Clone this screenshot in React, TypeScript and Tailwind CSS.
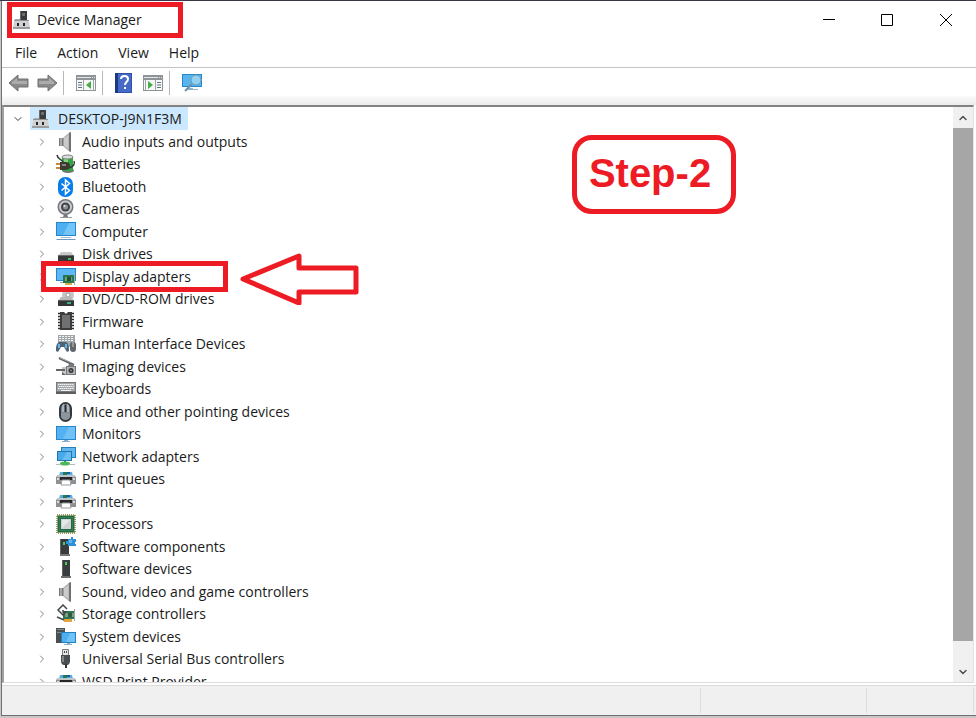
import React, { useState } from 'react';
import { ChevronDown, ChevronRight, ChevronUp } from 'lucide-react';

interface Device {
  label: string;
  icon: React.ReactNode;
  highlighted?: boolean;
}

interface IconProps {
  children: React.ReactNode;
}

const Icon: React.FC<IconProps> = ({ children }) => (
  <svg viewBox="0 0 20 20" className="h-5 w-5 shrink-0" aria-hidden="true">
    {children}
  </svg>
);

// Root computer icon, also used in the title bar
const RootIcon = () => (
  <Icon>
    <path d="M9 1h7v10H9z" fill="#3b3b3d" />
    <path d="M11 3h3v3h-3z" fill="#6c6c70" />
    <path d="M9 1h1v10H9z" fill="#6b6b6e" />
    <path d="M4 9h5v2H4z" fill="#a9abad" />
    <path d="M3 11h15l1 7H2z" fill="#d0d1d2" />
    <path d="M3 10h15v1H3z" fill="#8f9194" />
    <path d="M2 17h17v2H2z" fill="#9b9c9e" />
    <path d="M6 13h2v3H6zM12 13h2v3h-2z" fill="#222224" />
  </Icon>
);

const SpeakerIcon = () => (
  <Icon>
    <path d="M3 6h4v8H3z" fill="#77787a" />
    <path d="M4 6h2v8H4z" fill="#a7a8a9" />
    <path d="M7 6l7-6v20l-7-6z" fill="#9fa0a2" />
    <path d="M8 6l4-3v14l-4-3z" fill="#c9cacb" />
    <path d="M13 1l2-1v20l-2-1z" fill="#6f7173" />
    <path d="M12 2h1v16h-1z" fill="#b9babc" />
  </Icon>
);

const BatteryIcon = () => (
  <Icon>
    <ellipse cx="12" cy="16.500" rx="6" ry="2.500" fill="#6f7375" />
    <path d="M6 3h11v14H6z" fill="#34a641" />
    <path d="M8 4h4v12H8z" fill="#82d67a" />
    <ellipse cx="11.500" cy="3" rx="5.500" ry="2" fill="#d9dddb" stroke="#777d79" />
    <path d="M1 1c1 5 4 3 6 7M12 14c6-1 7-4 6-7" fill="none" stroke="#34383a" strokeWidth="1.500" />
    <path d="M4 8h6c3 0 4 2 4 4s-1 4-4 4H4z" fill="#3d3a33" />
    <path d="M6 10h4v2H6z" fill="#898478" />
    <path d="M0 9h4v2H0zM0 13h4v2H0z" fill="#c28c38" />
  </Icon>
);

const BluetoothIcon = () => (
  <Icon>
    <rect x="2" y="0" width="15" height="20" rx="7" fill="#087eea" />
    <path d="M5.500 6.500l8 7-4 3.500V3l4 3.500-8 7" fill="none" stroke="#fff" strokeWidth="1.500" />
  </Icon>
);

const CameraIcon = () => (
  <Icon>
    <path d="M8 15h3l1 3H7z" fill="#77797c" />
    <path d="M4 18h12v1H4z" fill="#9b9c9e" />
    <circle cx="9.500" cy="8" r="8" fill="#75777a" />
    <circle cx="9.500" cy="8" r="6.500" fill="#c9cbcd" />
    <circle cx="9.500" cy="8" r="4.500" fill="#424449" />
    <circle cx="9.500" cy="8" r="2.500" fill="#8d9197" />
    <circle cx="8.500" cy="7" r="1" fill="#e5e8ed" />
  </Icon>
);

const ComputerIcon = () => (
  <Icon>
    <path d="M0 0h20v14H0z" fill="#2686cc" />
    <path d="M1 1h18v12H1z" fill="#4eaff1" />
    <path d="M13 1h6v12H7z" fill="#73c5f9" />
    <path d="M5 15h10v1H5z" fill="#a5bdcc" />
    <path d="M1 17h18l1 1H0z" fill="#6b9cc4" />
  </Icon>
);

const DiskIcon = () => (
  <Icon>
    <path d="M5 8h10l3 4H2z" fill="#c7c8c9" />
    <path d="M2 11h16v6H2z" fill="#353739" />
    <path d="M2 11h16v1H2z" fill="#696b6d" />
    <path d="M12 14h3v2h-3z" fill="#37c45d" />
  </Icon>
);

const DisplayIcon = () => (
  <Icon>
    <path d="M0 1h20v13H0z" fill="#2686cc" />
    <path d="M1 2h18v11H1z" fill="#5db7f3" />
    <path d="M4 15h5v1H4z" fill="#85aac3" />
    <path d="M7 8h12v8H7z" fill="#2b764c" />
    <path d="M9 10h7v4H9z" fill="#69a36c" />
    <path d="M11 10h4v4h-4z" fill="#294b37" />
    <path d="M18 6h1v12h-1z" fill="#a3afa7" />
    <path d="M9 16h7v2H9z" fill="#d9ae52" />
  </Icon>
);

const DvdIcon = () => (
  <Icon>
    <circle cx="12" cy="6" r="6" fill="#c3c5c7" />
    <circle cx="12" cy="6" r="2" fill="#fff" stroke="#9a9da0" />
    <path d="M5 8h10l3 4H2z" fill="#b6b8ba" />
    <path d="M2 11h16v6H2z" fill="#343638" />
    <path d="M2 11h16v1H2z" fill="#616467" />
    <path d="M11 13h4v2h-4z" fill="#31b481" />
  </Icon>
);

const FirmwareIcon = () => (
  <Icon>
    <path d="M2 1.500h3M2 4.500h3M2 7.500h3M2 10.500h3M2 13.500h3M2 16.500h3M15 1.500h3M15 4.500h3M15 7.500h3M15 10.500h3M15 13.500h3M15 16.500h3" stroke="#2c2c2d" strokeWidth="1.500" />
    <path d="M4 0h4l2 2 2-2h4v18H4z" fill="#3a3b3c" />
    <path d="M6 3h8v13H6z" fill="#6f7072" />
  </Icon>
);

const HidIcon = () => (
  <Icon>
    <path d="M2 1h17v12H2z" fill="#a2a7ab" />
    <path d="M3 2.500h15M3 4.500h15M3 6.500h15" stroke="#f2f3f3" strokeDasharray="2 1" />
    <path d="M3 8h7c3 2 3 5 3 9l-2 1-3-5H5l-3 5-2-1c0-4 0-7 3-9z" fill="#4f6376" />
    <path d="M2 10h2v4H2zM9 10h2v4H9z" fill="#67b6e9" />
    <rect x="14" y="8" width="6" height="10" rx="3" fill="#61666b" />
    <path d="M17 8v5" stroke="#c8cacc" />
  </Icon>
);

const ImagingIcon = () => (
  <Icon>
    <path d="M3 1l15 7" stroke="#5b5e60" strokeWidth="2" />
    <path d="M4 1l12 5" stroke="#a6a8a9" />
    <path d="M10 9h2l1-2h4l1 2h2v9H10z" fill="#777a7c" />
    <path d="M11 10h8v7h-8z" fill="#b1b3b5" />
    <circle cx="15" cy="13.500" r="2.500" fill="#343638" />
    <circle cx="15" cy="13.500" r="1" fill="#85898b" />
    <path d="M6 10h4v8H6z" fill="#c4c5c7" />
    <path d="M0 12h9v2H0z" fill="#646668" />
    <path d="M6 15l4 3H6z" fill="#646668" />
  </Icon>
);

const KeyboardIcon = () => (
  <Icon>
    <path d="M0 3h20v12H0z" fill="#777a7d" />
    <path d="M1 4h18v8H1z" fill="#a5a8aa" />
    <path d="M2 5.500h16M3 7.500h15M2 9.500h16" stroke="#f4f4f4" strokeDasharray="1.500 .5" />
    <path d="M5 11.500h10" stroke="#f4f4f4" />
    <path d="M0 13h20v2H0z" fill="#5c5f62" />
  </Icon>
);

const MouseIcon = () => (
  <Icon>
    <rect x="4" y="1" width="11" height="18" rx="5.500" fill="#7d868e" stroke="#34393d" strokeWidth="2" />
    <path d="M6 5c0-2 1-3 2-3v8H6zM11 2c1 0 2 1 2 3v5h-2z" fill="#aab3bc" />
    <path d="M5 11h9v3c0 5-9 5-9 0z" fill="#8b959e" />
    <path d="M9.500 3v7" stroke="#222" strokeWidth="1.500" />
  </Icon>
);

const MonitorIcon = () => (
  <Icon>
    <path d="M0 2h20v14H0z" fill="#2686cc" />
    <path d="M1 3h18v12H1z" fill="#54b2f2" />
    <path d="M13 3h6v12H7z" fill="#70c2f6" />
    <path d="M8 16h4v1h2v1H6v-1h2z" fill="#88adca" />
  </Icon>
);

const NetworkIcon = () => (
  <Icon>
    <path d="M5 0h15v11H5z" fill="#237fbd" />
    <path d="M6 1h13v9H6z" fill="#60b8ee" />
    <path d="M1 4h15v10H1z" fill="#2076b0" />
    <path d="M2 5h13v8H2z" fill="#48a9ea" />
    <path d="M11 5h4v8H6z" fill="#69bdf3" />
    <path d="M8 14h2v3H8z" fill="#377e43" />
    <ellipse cx="9" cy="16.500" rx="5" ry="2" fill="#4cb857" />
    <path d="M0 17.500h5M13 17.500h6" stroke="#b6bdb7" />
  </Icon>
);

const PrinterIcon = () => (
  <Icon>
    <path d="M4 3h12l1 4H3z" fill="#55aee7" />
    <path d="M7 3h4v3H7z" fill="#28774d" />
    <path d="M11 3h3v2h-3z" fill="#195ba0" />
    <path d="M2 6h16l2 2v7h-5v-3H5v3H0V8z" fill="#8d9194" />
    <path d="M2 6h16l1 2H1z" fill="#c2c5c7" />
    <path d="M4 8h12v3H4z" fill="#26282b" />
    <path d="M6 11h8l1 5H5z" fill="#fff" stroke="#96999c" />
    <path d="M1 10h2M17 10h2" stroke="#d9dbdd" strokeWidth="2" />
  </Icon>
);

const ProcessorIcon = () => (
  <Icon>
    <path d="M1 1h18v18H1z" fill="#9db48d" stroke="#80793c" strokeWidth="1.500" strokeDasharray="1 1" />
    <path d="M2 2h16v16H2z" fill="#1f6b45" />
    <path d="M3.500 3.500h13v13h-13z" fill="none" stroke="#4d9065" strokeDasharray="1 1" />
    <path d="M5 5h10v10H5z" fill="#d0d2d3" />
    <path d="M6 6h8L6 14z" fill="#e6e7e8" />
  </Icon>
);

const TowerIcon = () => (
  <Icon>
    <path d="M6 1h8v16H6z" fill="#3a3d3f" />
    <path d="M6 1h1v16H6z" fill="#606366" />
    <path d="M9 3h2v3H9z" fill="#45cf5c" />
    <path d="M5 17h10v2H5z" fill="#6d7072" />
  </Icon>
);

const ComponentIcon = () => (
  <Icon>
    <path d="M4 2h9v15H4z" fill="#393c3e" />
    <path d="M4 2h1v15H4z" fill="#626568" />
    <path d="M7 5h2v3H7z" fill="#45cf5c" />
    <path d="M4 17h10v2H4z" fill="#75787a" />
    <path d="M12 2h3V0h2v2h3v3h-1v2h1v2h-8V7h-2V4h2z" fill="#2d91d8" />
    <path d="M13 3h3v3h-3z" fill="#67b5e8" />
  </Icon>
);

const StorageIcon = () => (
  <Icon>
    <path d="M7 7h12v8H7z" fill="#2c7551" />
    <path d="M9 9h9v4H9z" fill="#79a184" />
    <path d="M12 9h4v4h-4z" fill="#315842" />
    <path d="M18 5h1v12h-1z" fill="#a1aaa4" />
    <path d="M8 15h8v3H8z" fill="#e7a43a" />
    <path d="M11 5L7 1 2 6l5 5 3-3H7V6" fill="none" stroke="#44484b" strokeWidth="1.500" />
    <path d="M1 13l7 3" fill="none" stroke="#44484b" strokeWidth="1.500" />
  </Icon>
);

const SystemIcon = () => (
  <Icon>
    <path d="M0 1h9v15H0z" fill="#4c5053" />
    <path d="M1 2h7v1H1zM1 5h7v1H1z" fill="#83888b" />
    <path d="M5 5h15v11H5z" fill="#2380c0" />
    <path d="M6 6h13v9H6z" fill="#4eafef" />
    <path d="M14 6h5v9h-9z" fill="#70c2f6" />
    <path d="M11 16h3v1h2v1H8v-1h3z" fill="#89aec7" />
  </Icon>
);

const UsbIcon = () => (
  <Icon>
    <path d="M6.500.5h6v6h-6z" fill="#e3e4e5" stroke="#77797b" />
    <path d="M8 2h1v2H8zM10 2h1v2h-1z" fill="#494b4d" />
    <path d="M5 6h9v6c0 2-1 4-3 4H8c-2 0-3-2-3-4z" fill="#4b4e50" />
    <path d="M6 7h2v6H6z" fill="#85888a" />
    <path d="M9 15h2v4H9z" fill="#333638" />
  </Icon>
);

const devices: Device[] = [
  { label: 'Audio inputs and outputs', icon: <SpeakerIcon /> },
  { label: 'Batteries', icon: <BatteryIcon /> },
  { label: 'Bluetooth', icon: <BluetoothIcon /> },
  { label: 'Cameras', icon: <CameraIcon /> },
  { label: 'Computer', icon: <ComputerIcon /> },
  { label: 'Disk drives', icon: <DiskIcon /> },
  { label: 'Display adapters', icon: <DisplayIcon />, highlighted: true },
  { label: 'DVD/CD-ROM drives', icon: <DvdIcon /> },
  { label: 'Firmware', icon: <FirmwareIcon /> },
  { label: 'Human Interface Devices', icon: <HidIcon /> },
  { label: 'Imaging devices', icon: <ImagingIcon /> },
  { label: 'Keyboards', icon: <KeyboardIcon /> },
  { label: 'Mice and other pointing devices', icon: <MouseIcon /> },
  { label: 'Monitors', icon: <MonitorIcon /> },
  { label: 'Network adapters', icon: <NetworkIcon /> },
  { label: 'Print queues', icon: <PrinterIcon /> },
  { label: 'Printers', icon: <PrinterIcon /> },
  { label: 'Processors', icon: <ProcessorIcon /> },
  { label: 'Software components', icon: <ComponentIcon /> },
  { label: 'Software devices', icon: <TowerIcon /> },
  { label: 'Sound, video and game controllers', icon: <SpeakerIcon /> },
  { label: 'Storage controllers', icon: <StorageIcon /> },
  { label: 'System devices', icon: <SystemIcon /> },
  { label: 'Universal Serial Bus controllers', icon: <UsbIcon /> },
  { label: 'WSD Print Provider', icon: <PrinterIcon /> },
];

const TitleBar = () => (
  <header className="relative flex h-[38px] shrink-0 items-center justify-between pl-[9px]">
    <div className="flex items-center gap-[6px]">
      <RootIcon />
      <h1 className="text-sm">Device Manager</h1>
    </div>
    <div className="flex h-full">
      <button type="button" aria-label="Minimize" className="flex w-[58px] items-center justify-center">
        <svg viewBox="0 0 12 12" className="h-3 w-3"><path d="M0 5.500h12" stroke="#000" /></svg>
      </button>
      <button type="button" aria-label="Maximize" className="flex w-[58px] items-center justify-center">
        <svg viewBox="0 0 12 12" className="h-3 w-3"><path d="M.5.5h11v11H.5z" fill="none" stroke="#000" /></svg>
      </button>
      <button type="button" aria-label="Close" className="flex w-[60px] items-center justify-center">
        <svg viewBox="0 0 12 12" className="h-3 w-3"><path d="M0 0l12 12M12 0L0 12" stroke="#000" /></svg>
      </button>
    </div>
    <div className="pointer-events-none absolute top-[1px] left-[5px] h-9 w-44 border-[5px] border-[#ed1c24]" />
  </header>
);

const MenuBar = () => (
  <nav className="flex h-[29px] shrink-0 items-center gap-5 border-b border-[#c4c4c4] pl-[13px] text-sm">
    {['File', 'Action', 'View', 'Help'].map((item) => (
      <button key={item} type="button">{item}</button>
    ))}
  </nav>
);

const Toolbar = () => (
  <div className="flex h-[37px] shrink-0 flex-col">
    <div className="flex h-7 items-center pt-[2px] pl-[6px]">
      <button type="button" aria-label="Back" className="mr-2">
        <svg viewBox="0 0 21 20" className="h-5 w-[21px]"><path d="M1 10l9-8v4h10v8H10v4z" fill="#8a8a8a" stroke="#707070" /><path d="M4 9l5-4v3h10v3H4z" fill="#ababab" /></svg>
      </button>
      <button type="button" aria-label="Forward">
        <svg viewBox="0 0 21 20" className="h-5 w-[21px]"><path d="M20 10l-9-8v4H1v8h10v4z" fill="#8a8a8a" stroke="#707070" /><path d="M17 9l-5-4v3H2v3h15z" fill="#ababab" /></svg>
      </button>
      <span className="mr-3 ml-[5px] h-6 w-px bg-[#b8b8b8]" />
      <button type="button" aria-label="Show/Hide Console Tree">
        <svg viewBox="0 0 20 18" className="h-[18px] w-5"><path d="M0 1h20v16H0z" fill="#8e9498" /><path d="M1 3h14v1H1zM16 3h1v1h-1zM18 3h1v1h-1z" fill="#e4e7e8" /><path d="M1 6h18v10H1z" fill="#f7f8f8" /><path d="M2 8.500h4M2 11h4M2 13.500h4" stroke="#5f7382" /><path d="M7.500 6v10M17.500 6v10" stroke="#9ba3a8" /><path d="M15 7v8l-5-4z" fill="#44ad43" /></svg>
      </button>
      <span className="mr-3 ml-[6px] h-6 w-px bg-[#b8b8b8]" />
      <button type="button" aria-label="Help" className="mr-[11px]">
        <svg viewBox="0 0 17 20" className="h-5 w-[17px]"><path d="M0 0h17v20H0z" fill="#2e50a8" /><path d="M0 0h3v20H0z" fill="#1c3984" /><path d="M3 1h13v18H3z" fill="#4569c6" /><path d="M6 6c0-4 7-4 7 0 0 3-3 3-3 6" fill="none" stroke="#fff" strokeWidth="2" /><path d="M9 14h2v2H9z" fill="#fff" /></svg>
      </button>
      <button type="button" aria-label="Show/Hide Action Pane">
        <svg viewBox="0 0 20 18" className="h-[18px] w-5"><path d="M0 1h20v16H0z" fill="#8e9498" /><path d="M1 3h14v1H1zM16 3h1v1h-1zM18 3h1v1h-1z" fill="#e4e7e8" /><path d="M1 6h18v10H1z" fill="#f7f8f8" /><path d="M14 8.500h4M14 11h4M14 13.500h4" stroke="#5f7382" /><path d="M2.500 6v10M12.500 6v10" stroke="#9ba3a8" /><path d="M5 7v8l5-4z" fill="#44ad43" /></svg>
      </button>
      <span className="mr-3 ml-[6px] h-6 w-px bg-[#b8b8b8]" />
      <button type="button" aria-label="Scan for hardware changes">
        <svg viewBox="0 0 21 20" className="h-5 w-[21px]"><path d="M0 1h20v13H0z" fill="#2688ca" /><path d="M1 2h18v11H1z" fill="#58b5eb" /><path d="M6 15h5v1h5v1H4v-1h2z" fill="#8fb6cf" /><path d="M10 11l-7 7" stroke="#6d91a9" strokeWidth="2" /><circle cx="14" cy="7" r="5" fill="#91d0f1" stroke="#6a9ab9" /></svg>
      </button>
    </div>
    <div className="flex-1 bg-linear-to-b from-[#fafafa] to-[#ebebeb]" />
  </div>
);

const DeviceRow: React.FC<{ device: Device }> = ({ device }) => (
  <li role="treeitem" className="relative flex items-center pl-[30px] odd:h-[23px] even:h-[22px]">
    <button type="button" aria-label={`Expand ${device.label}`} className="mr-[6px] flex w-4 justify-center text-[#858585]">
      <ChevronRight size={12} />
    </button>
    {device.icon}
    <span className="ml-[6px] leading-5 whitespace-nowrap">{device.label}</span>
    {device.highlighted && (
      <>
        <div className="pointer-events-none absolute -top-1 left-[37px] z-10 h-[31px] w-[187px] border-[5px] border-[#ed1c24]" />
        <svg viewBox="0 0 120 52" className="pointer-events-none absolute -top-3 left-[236px] z-10 h-[52px] w-[120px]" aria-hidden="true">
          <path d="M3 26L59 3v12h57v24H59v11z" fill="#fff" stroke="#ed1c24" strokeWidth="5" strokeLinejoin="round" />
        </svg>
      </>
    )}
  </li>
);

const DeviceTree = () => {
  const [expanded, setExpanded] = useState(true);

  return (
    <div role="tree" className="min-w-0 flex-1 overflow-hidden text-sm">
      <div className="flex h-[23px] items-center pl-[6px]">
        <button
          type="button"
          aria-label="Toggle DESKTOP-J9N1F3M"
          className="mr-1 flex w-4 justify-center text-[#404040]"
          onClick={() => setExpanded(!expanded)}
        >
          <ChevronDown size={12} />
        </button>
        <div className="flex h-full items-center gap-2 bg-[#cce8ff] pr-[6px]">
          <RootIcon />
          <span>DESKTOP-J9N1F3M</span>
        </div>
      </div>
      {expanded && (
        <ul role="group">
          {devices.map((device) => (
            <DeviceRow key={device.label} device={device} />
          ))}
        </ul>
      )}
    </div>
  );
};

const ScrollBar = () => (
  <div className="flex w-5 shrink-0 flex-col bg-[#f0f0f0] text-[#505050]">
    <button type="button" aria-label="Scroll up" className="flex h-[21px] items-center justify-center">
      <ChevronUp size={12} strokeWidth={3} />
    </button>
    <div className="flex flex-1 flex-col">
      <div className="grow-[24] bg-[#a6a6a6]" />
      <div className="grow" />
    </div>
    <button type="button" aria-label="Scroll down" className="flex h-5 items-center justify-center">
      <ChevronDown size={12} strokeWidth={3} />
    </button>
  </div>
);

export default function App() {
  return (
    <div className="flex h-screen flex-col overflow-hidden border-t border-[#3b3547] bg-[#c8c8c8] pb-[2px] pl-[1px] font-['Open_Sans',sans-serif] text-[#1a1a1a]">
      <div className="flex min-h-0 flex-1 flex-col border-b border-l border-[#707070] bg-white">
        <TitleBar />
        <MenuBar />
        <Toolbar />
        <main className="relative mr-[2px] flex min-h-0 flex-1 border-t-2 border-r border-b border-l-2 border-t-[#828282] border-r-[#e3e3e3] border-b-[#dcdcdc] border-l-[#a0a0a0]">
          <DeviceTree />
          <ScrollBar />
          <div className="absolute top-7 right-[237px] flex h-[79px] w-[164px] items-center justify-center rounded-[20px] border-[5px] border-[#ed1c24] bg-white pr-2 pb-1 font-['Liberation_Sans',sans-serif] text-[40px] font-bold text-[#ed1c24]">
            Step-2
          </div>
        </main>
        <footer className="mt-[2px] flex h-[30px] shrink-0 border-t border-[#dcdcdc] bg-[#f0f0f0] py-[2px] pr-[2px]">
          <div className="flex-1 border-r border-[#dcdcdc]" />
          <div className="w-[166px] border-r border-[#dcdcdc]" />
          <div className="w-[107px] border-r border-[#dcdcdc]" />
        </footer>
      </div>
    </div>
  );
}
